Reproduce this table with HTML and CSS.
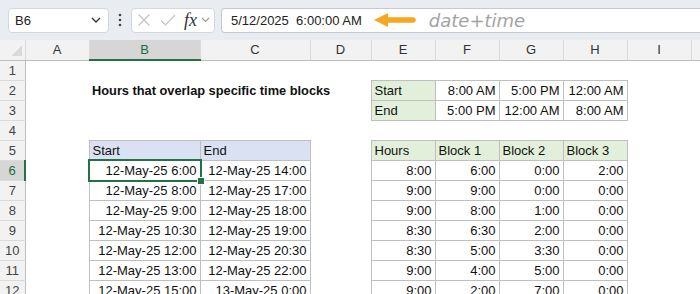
FILE: index.html
```html
<!DOCTYPE html>
<html lang="en">
<head>
    <meta charset="UTF-8">
    <title>Hours that overlap specific time blocks</title>
    <link rel="stylesheet" href="styles.css">
</head>
<body>
    <div class="toolbar">
        <div class="namebox">
            <span>B6</span>
            <svg width="10" height="6" viewBox="0 0 10 6"><path d="M1 1 L5 5 L9 1" fill="none" stroke="#333" stroke-width="1.3"/></svg>
        </div>
        <div class="dots">
            <svg width="4" height="14" viewBox="0 0 4 14"><circle cx="2" cy="2" r="1.3" fill="#444"/><circle cx="2" cy="7" r="1.3" fill="#444"/><circle cx="2" cy="12" r="1.3" fill="#444"/></svg>
        </div>
        <div class="fxbox">
            <svg width="14" height="14" viewBox="0 0 14 14"><path d="M1.5 1.5 L12.5 12.5 M12.5 1.5 L1.5 12.5" stroke="#c4c4c4" stroke-width="1.2"/></svg>
            <svg width="16" height="14" viewBox="0 0 16 14"><path d="M1 7.5 L5.5 12 L15 2" fill="none" stroke="#c4c4c4" stroke-width="1.2"/></svg>
            <span class="fx">fx</span>
            <svg width="9" height="6" viewBox="0 0 9 6"><path d="M1 1 L4.5 4.5 L8 1" fill="none" stroke="#999" stroke-width="1.1"/></svg>
        </div>
        <div class="formula">
            <span class="value">5/12/2025  6:00:00 AM</span>
            <svg class="arrow" width="42" height="16" viewBox="0 0 42 16"><path d="M0 8 L14 1 L14 15 Z" fill="#f5a81e"/><path d="M12 8 H39" stroke="#f5a81e" stroke-width="5.5" stroke-linecap="round"/></svg>
            <span class="note">date+time</span>
        </div>
    </div>

    <table class="sheet">
        <colgroup>
            <col class="c-rh"><col class="c-a"><col class="c-b"><col class="c-c"><col class="c-d">
            <col class="c-n"><col class="c-n"><col class="c-n"><col class="c-n"><col class="c-n"><col class="c-j">
        </colgroup>
        <tr class="colhead">
            <th class="corner"></th><th>A</th><th class="on">B</th><th>C</th><th>D</th><th>E</th><th>F</th><th>G</th><th>H</th><th>I</th><th></th>
        </tr>
        <tr>
            <th class="rowhead">1</th><td></td><td></td><td></td><td></td><td></td><td></td><td></td><td></td><td></td><td></td>
        </tr>
        <tr>
            <th class="rowhead">2</th><td></td><td class="title">Hours that overlap specific time blocks</td><td></td><td></td>
            <td class="b green">Start</td><td class="b num">8:00 AM</td><td class="b num">5:00 PM</td><td class="b num">12:00 AM</td><td></td><td></td>
        </tr>
        <tr>
            <th class="rowhead">3</th><td></td><td></td><td></td><td></td>
            <td class="b green">End</td><td class="b num">5:00 PM</td><td class="b num">12:00 AM</td><td class="b num">8:00 AM</td><td></td><td></td>
        </tr>
        <tr>
            <th class="rowhead">4</th><td></td><td></td><td></td><td></td><td></td><td></td><td></td><td></td><td></td><td></td>
        </tr>
        <tr>
            <th class="rowhead">5</th><td></td><td class="b blue">Start</td><td class="b blue">End</td><td></td>
            <td class="b green">Hours</td><td class="b green">Block 1</td><td class="b green">Block 2</td><td class="b green">Block 3</td><td></td><td></td>
        </tr>
        <tr>
            <th class="rowhead on">6</th><td></td><td class="b num sel">12-May-25 6:00<span class="cursor"><span class="handle"></span></span></td><td class="b num">12-May-25 14:00</td><td></td>
            <td class="b num">8:00</td><td class="b num">6:00</td><td class="b num">0:00</td><td class="b num">2:00</td><td></td><td></td>
        </tr>
        <tr>
            <th class="rowhead">7</th><td></td><td class="b num">12-May-25 8:00</td><td class="b num">12-May-25 17:00</td><td></td>
            <td class="b num">9:00</td><td class="b num">9:00</td><td class="b num">0:00</td><td class="b num">0:00</td><td></td><td></td>
        </tr>
        <tr>
            <th class="rowhead">8</th><td></td><td class="b num">12-May-25 9:00</td><td class="b num">12-May-25 18:00</td><td></td>
            <td class="b num">9:00</td><td class="b num">8:00</td><td class="b num">1:00</td><td class="b num">0:00</td><td></td><td></td>
        </tr>
        <tr>
            <th class="rowhead">9</th><td></td><td class="b num">12-May-25 10:30</td><td class="b num">12-May-25 19:00</td><td></td>
            <td class="b num">8:30</td><td class="b num">6:30</td><td class="b num">2:00</td><td class="b num">0:00</td><td></td><td></td>
        </tr>
        <tr>
            <th class="rowhead">10</th><td></td><td class="b num">12-May-25 12:00</td><td class="b num">12-May-25 20:30</td><td></td>
            <td class="b num">8:30</td><td class="b num">5:00</td><td class="b num">3:30</td><td class="b num">0:00</td><td></td><td></td>
        </tr>
        <tr>
            <th class="rowhead">11</th><td></td><td class="b num">12-May-25 13:00</td><td class="b num">12-May-25 22:00</td><td></td>
            <td class="b num">9:00</td><td class="b num">4:00</td><td class="b num">5:00</td><td class="b num">0:00</td><td></td><td></td>
        </tr>
        <tr>
            <th class="rowhead">12</th><td></td><td class="b num">12-May-25 15:00</td><td class="b num">13-May-25 0:00</td><td></td>
            <td class="b num">9:00</td><td class="b num">2:00</td><td class="b num">7:00</td><td class="b num">0:00</td><td></td><td></td>
        </tr>
    </table>
</body>
</html>
```

FILE: styles.css
```css
:root {
    --toolbar: #e9edf1;
    --head: #f2f2f2;
    --head-on: #d6d6d6;
    --green: #217346;
    --line: #bfbfbf;
}
html, body {
    margin: 0;
    padding: 0;
}
body {
    width: 700px;
    height: 294px;
    overflow: hidden;
    background: #fff;
    font-family: "Liberation Sans", Arial, sans-serif;
    color: #111;
}

/* formula bar */
.toolbar {
    height: 40px;
    background: var(--toolbar);
    display: flex;
    align-items: center;
    padding-left: 8px;
}
.namebox {
    width: 101px;
    height: 25px;
    box-sizing: border-box;
    background: #fff;
    border: 1px solid #d4d8dd;
    border-radius: 4px;
    display: flex;
    align-items: center;
    justify-content: space-between;
    padding: 0 7px 0 6px;
    font-size: 13px;
    color: #222;
}
.dots {
    width: 22px;
    display: flex;
    justify-content: center;
}
.fxbox {
    width: 84px;
    height: 25px;
    box-sizing: border-box;
    background: #fff;
    border: 1px solid #d4d8dd;
    border-radius: 4px;
    display: flex;
    align-items: center;
    gap: 9px;
    padding-left: 5px;
}
.fxbox .fx {
    font-family: "Liberation Serif", serif;
    font-style: italic;
    font-size: 18px;
    color: #333;
    margin-left: -1px;
    margin-right: -5px;
}
.formula {
    flex: 1;
    height: 25px;
    margin-left: 6px;
    box-sizing: border-box;
    background: #fff;
    border: 1px solid #c6cacf;
    border-right: none;
    border-radius: 4px 0 0 4px;
    display: flex;
    align-items: center;
    padding-left: 9px;
}
.formula .value {
    font-size: 13px;
    white-space: pre;
    color: #222;
}
.formula .arrow {
    margin-left: 12px;
}
.formula .note {
    margin-left: 13px;
    font-family: "DejaVu Sans", sans-serif;
    font-weight: 200;
    font-style: italic;
    font-size: 18px;
    color: #a3a3a3;
}

/* grid */
.sheet {
    border-collapse: collapse;
    table-layout: fixed;
    width: 731px;
}
.c-rh { width: 25px; }
.c-a { width: 64px; }
.c-b { width: 111px; }
.c-c { width: 110px; }
.c-d { width: 61px; }
.c-n { width: 64px; }
.c-j { width: 40px; }
.sheet tr {
    height: 20px;
}
.sheet td, .sheet th {
    padding: 0 3px;
    font-size: 13px;
    font-weight: normal;
    white-space: nowrap;
    overflow: visible;
}
.colhead th {
    background: var(--head);
    color: #333;
    text-align: center;
    border-right: 1px solid #dadada;
    border-bottom: 1px solid #bdbdbd;
}
.colhead th.on {
    background: var(--head-on);
    color: #1e6b3d;
    border-bottom: 2px solid var(--green);
}
.colhead .corner {
    background: var(--head) linear-gradient(135deg, transparent 58%, #d9d9d9 58%) no-repeat 10px 4px / 12px 12px;
}
.rowhead {
    background: var(--head);
    color: #444;
    text-align: center;
    padding: 0;
    border-right: 1px solid #bdbdbd;
    border-bottom: 1px solid #dadada;
}
.rowhead.on {
    background: var(--head-on);
    color: #1e6b3d;
    border-right: 2px solid var(--green);
}
.sheet .title {
    font-weight: bold;
    font-size: 12.8px;
}
.b {
    border: 1px solid var(--line);
}
.num {
    text-align: right;
}
.blue {
    background: #d9e1f2;
}
.green {
    background: #e2efda;
}
.sel {
    position: relative;
}
.cursor {
    position: absolute;
    left: -2px;
    top: -2px;
    right: -2px;
    bottom: -2px;
    border: 2px solid var(--green);
}
.handle {
    position: absolute;
    right: -5px;
    bottom: -5px;
    width: 6px;
    height: 6px;
    background: var(--green);
    border: 1px solid #fff;
}
```
